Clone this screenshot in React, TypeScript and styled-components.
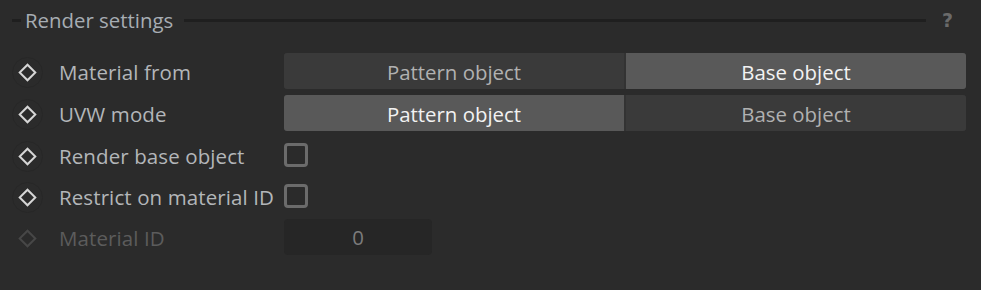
import React, { useState } from 'react'
import styled, { createGlobalStyle } from 'styled-components'

const GlobalStyle = createGlobalStyle`
  html, body {
    margin: 0;
    padding: 0;
    background: #2b2b2b;
  }
  body {
    font-family: 'Open Sans', 'Noto Sans', sans-serif;
  }
`

const Panel = styled.div`
  width: 981px;
  height: 290px;
  background: #2b2b2b;
  box-sizing: border-box;
  padding: 9px 15px 0 12px;
`

const Header = styled.div`
  display: flex;
  align-items: center;
  height: 22px;
`

const HeaderRule = styled.div<{ $grow?: boolean }>`
  height: 3px;
  background: #1f1f1f;
  width: ${p => (p.$grow ? 'auto' : '9px')};
  flex: ${p => (p.$grow ? 1 : 'none')};
`

const HeaderTitle = styled.span`
  color: #a7adb3;
  font-size: 20.4px;
  padding: 0 11px 0 4px;
  line-height: 22px;
`

const Help = styled.span`
  color: #6a6a6a;
  font-family: 'DejaVu Sans', sans-serif;
  font-weight: bold;
  font-size: 19px;
  margin-left: 16px;
  margin-right: 13px;
  line-height: 22px;
`

const Rows = styled.div`
  display: flex;
  flex-direction: column;
  gap: 6px;
  margin-top: 22px;
`

const Row = styled.div<{ $h: number }>`
  display: grid;
  grid-template-columns: 272px 1fr;
  align-items: center;
  height: ${p => p.$h}px;
`

const LabelCell = styled.div<{ $dim?: boolean }>`
  display: flex;
  align-items: center;
  color: ${p => (p.$dim ? '#5c5c5c' : '#b3b6b9')};
  font-size: 20.5px;
  letter-spacing: 0.1px;
  white-space: nowrap;
  padding-top: 2px;
`

const KeyRing = styled.span<{ $dim?: boolean }>`
  width: 31px;
  height: 31px;
  box-sizing: border-box;
  border-radius: 50%;
  border: 1px solid ${p => (p.$dim ? 'transparent' : '#272727')};
  display: flex;
  align-items: center;
  justify-content: center;
  margin-right: 16px;
`

const Diamond = styled.span<{ $dim?: boolean }>`
  width: 9px;
  height: 9px;
  border: 2px solid ${p => (p.$dim ? '#474747' : '#d6d6d6')};
  transform: rotate(45deg);
`

const Segmented = styled.div`
  display: flex;
  height: 36px;
  gap: 2px;
  background: #333;
  border-radius: 3px;
  overflow: hidden;
`

const Segment = styled.button<{ $active: boolean }>`
  flex: 1;
  border: none;
  margin: 0;
  padding: 2px 0 0;
  font-family: inherit;
  font-size: 20.4px;
  background: ${p => (p.$active ? '#595959' : '#3a3a3a')};
  color: ${p => (p.$active ? '#f2f2f2' : '#b1b1b1')};
  cursor: pointer;
`

const Check = styled.span`
  width: 24px;
  height: 24px;
  box-sizing: border-box;
  border: 3px solid #6b6b6b;
  border-radius: 4px;
`

const NumberField = styled.div`
  width: 148px;
  height: 36px;
  background: #262626;
  border-radius: 4px;
  display: flex;
  align-items: center;
  justify-content: center;
  color: #7c7c7c;
  font-size: 20.4px;
`

const Label = ({ text, dim }: { text: string; dim?: boolean }) => (
  <LabelCell $dim={dim}>
    <KeyRing $dim={dim}>
      <Diamond $dim={dim} />
    </KeyRing>
    {text}
  </LabelCell>
)

const Toggle = ({ value, onChange }: { value: number; onChange: (v: number) => void }) => (
  <Segmented>
    {['Pattern object', 'Base object'].map((t, i) => (
      <Segment key={t} $active={value === i} onClick={() => onChange(i)}>
        {t}
      </Segment>
    ))}
  </Segmented>
)

export default function App() {
  const [material, setMaterial] = useState(1)
  const [uvw, setUvw] = useState(0)

  return (
    <Panel>
      <GlobalStyle />
      <Header>
        <HeaderRule />
        <HeaderTitle>Render settings</HeaderTitle>
        <HeaderRule $grow />
        <Help>?</Help>
      </Header>
      <Rows>
        <Row $h={36}>
          <Label text="Material from" />
          <Toggle value={material} onChange={setMaterial} />
        </Row>
        <Row $h={36}>
          <Label text="UVW mode" />
          <Toggle value={uvw} onChange={setUvw} />
        </Row>
        <Row $h={36}>
          <Label text="Render base object" />
          <Check />
        </Row>
        <Row $h={34}>
          <Label text="Restrict on material ID" />
          <Check />
        </Row>
        <Row $h={36}>
          <Label text="Material ID" dim />
          <NumberField>0</NumberField>
        </Row>
      </Rows>
    </Panel>
  )
}
